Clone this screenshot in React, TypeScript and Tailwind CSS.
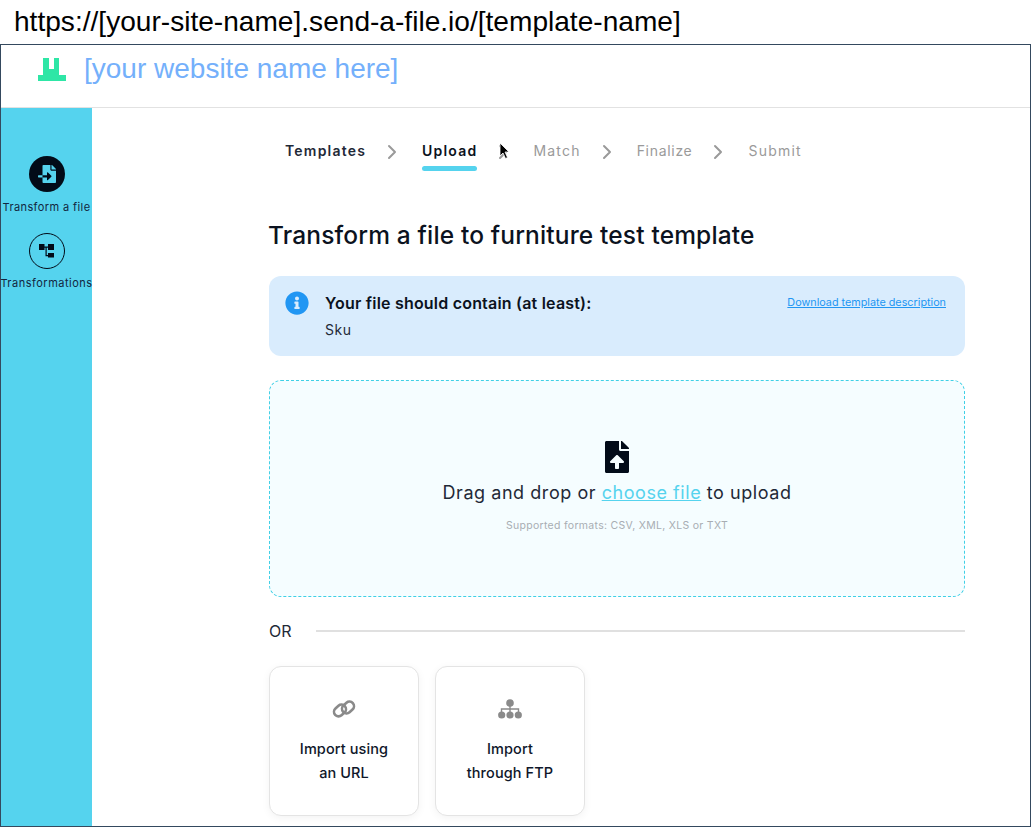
import React from 'react';
import { ChevronRight } from 'lucide-react';
import { FaFileImport, FaFileUpload, FaInfoCircle } from 'react-icons/fa';

const steps = [
  { label: 'Templates', state: 'done' },
  { label: 'Upload', state: 'active' },
  { label: 'Match', state: 'todo' },
  { label: 'Finalize', state: 'todo' },
  { label: 'Submit', state: 'todo' }
];

function Logo() {
  return (
    <svg width="28" height="23" viewBox="0 0 28 23" fill="#2ee6a6">
      <path d="M0 17h5V0h6v11h5V0h5v17h7v6H0z" />
    </svg>
  );
}

function TreeIcon() {
  return (
    <svg width="15" height="14" viewBox="0 0 15 14" fill="#020b18">
      <path d="M0 0h5.500v6H0zM9 0h6v6H9zM9 9h6v4.500H9z" />
      <path d="M5 2.500h4v1.200H5zM6.500 3h1.200v8H9v1.200H6.500z" />
    </svg>
  );
}

function ChainIcon() {
  return (
    <svg width="24" height="20" viewBox="0 0 24 20" fill="none" stroke="#8a8a8a" strokeWidth="2.600">
      <rect x="1.500" y="7" width="13" height="9" rx="4.500" transform="rotate(-42 8 11.500)" />
      <rect x="9.500" y="4" width="13" height="9" rx="4.500" transform="rotate(-42 16 8.500)" />
    </svg>
  );
}

function SitemapIcon() {
  return (
    <svg width="24" height="20" viewBox="0 0 24 20" fill="#8a8a8a">
      <circle cx="12" cy="4" r="3.800" />
      <circle cx="3.700" cy="16" r="3.600" />
      <circle cx="12" cy="16" r="3.600" />
      <circle cx="20.300" cy="16" r="3.600" />
      <path d="M11.300 6h1.400v3.300h8.500V14h-1.400v-3.300h-7.100V14h-1.400v-3.300H4.200V14H2.800V9.300h8.500z" />
    </svg>
  );
}

function Cursor() {
  return (
    <svg className="absolute left-[499px] top-[142px]" width="11" height="18" viewBox="0 0 11 18">
      <path d="M1 1v13l3-3 2.500 5.500 2-1L6 10h4z" fill="#000" stroke="#fff" strokeWidth="0.8" />
    </svg>
  );
}

function ImportCard({ icon, lines }: { icon: React.ReactNode; lines: string[] }) {
  return (
    <div className="w-[150px] h-[150px] rounded-xl border border-[#e4e4e4] bg-white shadow-[0_2px_8px_rgba(0,0,0,0.05)] flex flex-col items-center pt-[30px]">
      <div className="h-6 flex items-center justify-center">{icon}</div>
      <div className="mt-[16px] text-center text-[14.500px] leading-6 text-[#0f172a] font-medium tracking-[0.1px]">
        {lines.map((line) => (
          <div key={line}>{line}</div>
        ))}
      </div>
    </div>
  );
}

export default function App() {
  return (
    <div className="relative w-[1031px] h-[827px] overflow-hidden bg-white font-['Inter',sans-serif] flex flex-col">
      <div className="h-[44px] pl-[14px] pt-[4px] text-[28.100px] leading-[36px] text-black font-['Liberation_Sans',sans-serif] shrink-0">
        https://[your-site-name].send-a-file.io/[template-name]
      </div>

      <div className="flex-1 min-h-0 border border-[#34495e] flex flex-col">
        <header className="h-[63px] border-b border-[#e2e2e2] shrink-0 flex items-start pl-[37px] pt-[13px]">
          <Logo />
          <span className="ml-[18px] mt-[-3px] text-[28px] leading-[28px] text-[#74b0fb] font-['Liberation_Sans',sans-serif]">
            [your website name here]
          </span>
        </header>

        <div className="flex-1 min-h-0 flex">
          <aside className="w-[91px] shrink-0 bg-[#55d3ee] flex flex-col items-center pt-[48px]">
            <div className="w-9 h-9 rounded-full bg-[#020b18] flex items-center justify-center text-[#55d3ee]">
              <FaFileImport size={18} />
            </div>
            <div className="mt-[8px] text-[11px] leading-[14px] text-[#12263f] whitespace-nowrap tracking-[0.4px]">Transform a file</div>
            <div className="mt-[19px] w-9 h-9 rounded-full border border-[#020b18] flex items-center justify-center">
              <TreeIcon />
            </div>
            <div className="mt-[7px] text-[11px] leading-[14px] text-[#12263f] whitespace-nowrap tracking-[0.5px]">Transformations</div>
          </aside>

          <main className="flex-1 min-w-0 pl-[177px] pr-[65px]">
            <nav className="h-[62px] pl-[16px] flex items-start pt-[34px]">
              {steps.map((step, i) => (
                <div key={step.label} className="flex items-start">
                  <div className="relative">
                    <div
                      className={
                        step.state === 'todo'
                          ? 'text-[14px] leading-[18px] text-[#9a9a9a] ' + (step.label === 'Finalize' ? 'tracking-[0.7px]' : 'tracking-[1.2px]')
                          : 'text-[14px] leading-[18px] font-semibold tracking-[1.2px] ' + (step.state === 'active' ? 'text-[#0b1220]' : 'text-[#1f2937]')
                      }
                    >
                      {step.label}
                    </div>
                    {step.state === 'active' && (
                      <div className="absolute left-0 right-0 top-[24px] h-[5px] rounded-full bg-[#55d3ee]" />
                    )}
                  </div>
                  {i < steps.length - 1 && (
                    <ChevronRight size={24} strokeWidth={2} className="text-[#9a9a9a] ml-[14px] mr-[18px] -mt-[2px]" />
                  )}
                </div>
              ))}
            </nav>

            <h1 className="mt-[49px] -ml-px text-[24.500px] leading-[32px] font-medium tracking-[0.15px] text-[#0b1220]">
              Transform a file to furniture test template
            </h1>

            <div className="mt-[25px] h-[80px] rounded-xl bg-[#d9ecfd] flex pl-[16px] pr-[19px] pt-[15px]">
              <FaInfoCircle size={24} className="text-[#2196f3] shrink-0" />
              <div className="ml-[16px] flex-1">
                <div className="text-[16px] leading-[24px] font-semibold tracking-[0.2px] text-[#0b1220]">Your file should contain (at least):</div>
                <div className="mt-[4px] text-[14px] leading-[22px] tracking-[0.5px] text-[#1f2937]">Sku</div>
              </div>
              <a className="text-[10.800px] leading-[24px] underline text-[#2196f3]">Download template description</a>
            </div>

            <div className="mt-[24px] h-[217px] rounded-xl border border-dashed border-[#3fd0e6] bg-[#f5fdff] flex flex-col items-center pt-[60px]">
              <FaFileUpload size={32} className="text-[#020b18]" />
              <div className="mt-[7px] text-[18px] leading-[26px] text-[#1f2937] tracking-[0.55px]">
                Drag and drop or <a className="text-[#55d3ee] underline">choose file</a> to upload
              </div>
              <div className="mt-[12px] text-[10.500px] leading-[16px] text-[#a8adb3] tracking-[0.3px]">Supported formats: CSV, XML, XLS or TXT</div>
            </div>

            <div className="mt-[23px] flex items-center">
              <span className="text-[16px] leading-[22px] text-[#1f2937]">OR</span>
              <div className="ml-[24px] flex-1 h-[2px] bg-[#e0e0e0]" />
            </div>

            <div className="mt-[24px] flex gap-4">
              <ImportCard icon={<ChainIcon />} lines={['Import using', 'an URL']} />
              <ImportCard icon={<SitemapIcon />} lines={['Import', 'through FTP']} />
            </div>
          </main>
        </div>
      </div>
      <Cursor />
    </div>
  );
}
